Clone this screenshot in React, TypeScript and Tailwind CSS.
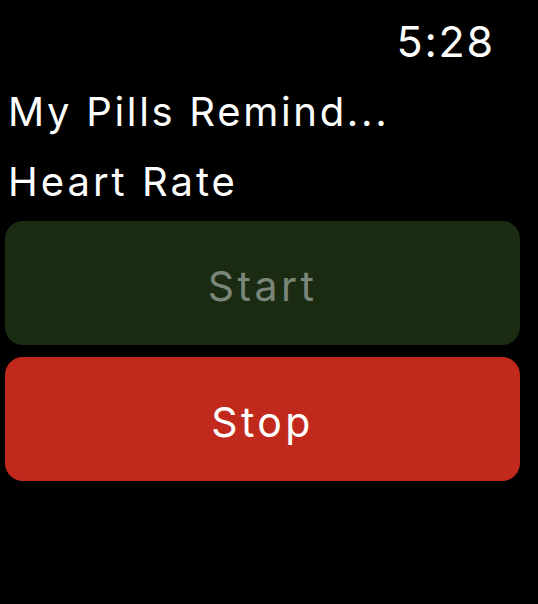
export default function App() {
  return (
    <div className="w-[538px] h-[604px] bg-black text-white font-['Inter','Liberation_Sans',sans-serif] pt-[6px]">
      <div className="h-[71px] leading-[70px] text-[43px] text-right pr-[43px] tracking-[1.8px]">5:28</div>
      <div className="h-[70px] leading-[70px] text-[40px] pl-[8px] tracking-[2.7px]">My Pills Remind...</div>
      <div className="h-[70px] leading-[70px] text-[40px] pl-[8px] tracking-[3px]">Heart Rate</div>
      <div className="flex flex-col gap-[12px] pl-[5px] pr-[18px] pt-[4px]">
        <button className="h-[124px] rounded-[18px] bg-[#1a2b12] text-[#7a8679] text-[41px] tracking-[3.4px] pt-[7px] flex items-center justify-center">
          Start
        </button>
        <button className="h-[124px] rounded-[18px] bg-[#c1291c] text-white text-[41px] tracking-[3.4px] pt-[7px] flex items-center justify-center">
          Stop
        </button>
      </div>
    </div>
  );
}
